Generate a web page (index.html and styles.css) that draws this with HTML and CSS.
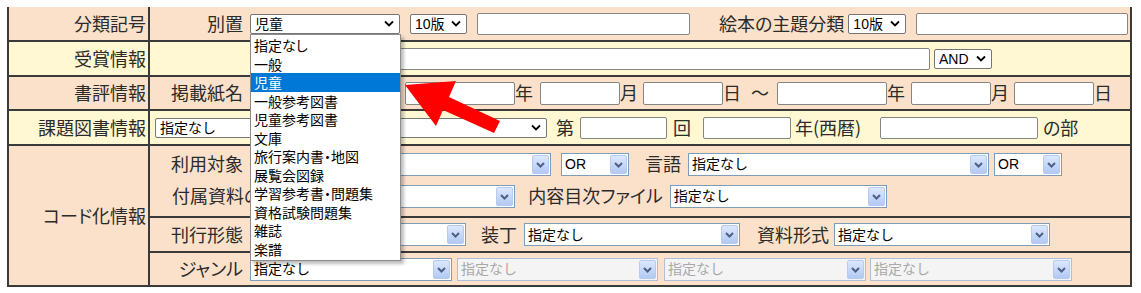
FILE: index.html
```html
<!DOCTYPE html>
<html lang="ja">
<head>
    <meta charset="UTF-8">
    <title>詳細検索</title>
    <link rel="stylesheet" href="styles.css">
</head>
<body>
<div class="page">
    <table class="search">
        <tr class="peach">
            <th>分類記号</th>
            <td>
                <div class="line">
                    <span class="sub">別置</span>
                    <select class="win w150"><option>児童</option></select>
                    <select class="win w57 ml10"><option>10版</option></select>
                    <input type="text" class="txt w213 ml10">
                    <span class="ml29">絵本の主題分類</span>
                    <select class="win w58 ml4"><option>10版</option></select>
                    <input type="text" class="txt w212 ml10">
                </div>
            </td>
        </tr>
        <tr class="cream">
            <th>受賞情報</th>
            <td>
                <div class="line">
                    <span class="sub"></span>
                    <input type="text" class="txt w680">
                    <select class="win w58 ml4"><option>AND</option></select>
                </div>
            </td>
        </tr>
        <tr class="peach">
            <th>書評情報</th>
            <td>
                <div class="line h32">
                    <span class="sub">掲載紙名</span>
                    <select class="win w150"><option>指定なし</option></select>
                    <input type="text" class="txt tall w110 ml5">
                    <span>年</span>
                    <input type="text" class="txt tall w80 ml7">
                    <span>月</span>
                    <input type="text" class="txt tall w80 ml5">
                    <span>日</span>
                    <span class="ml10">〜</span>
                    <input type="text" class="txt tall w110 ml8">
                    <span>年</span>
                    <input type="text" class="txt tall w80 ml6">
                    <span>月</span>
                    <input type="text" class="txt tall w80 ml5">
                    <span>日</span>
                </div>
            </td>
        </tr>
        <tr class="cream">
            <th>課題図書情報</th>
            <td>
                <div class="line">
                    <select class="win w392 ml5"><option>指定なし</option></select>
                    <span class="ml9">第</span>
                    <input type="text" class="txt w87 ml6">
                    <span class="ml6">回</span>
                    <input type="text" class="txt w88 ml12">
                    <span class="ml4 era">年(西暦)</span>
                    <input type="text" class="txt w158">
                    <span class="ml5">の部</span>
                </div>
            </td>
        </tr>
        <tr class="peach">
            <th>コード化情報</th>
            <td>
                <div class="subrow double">
                    <div class="line h32">
                        <span class="sub">利用対象</span>
                        <select class="xp w301"><option>指定なし</option></select>
                        <select class="xp w68 ml10"><option>OR</option></select>
                        <span class="ml16">言語</span>
                        <select class="xp w301 ml7"><option>指定なし</option></select>
                        <select class="xp w68 ml5"><option>OR</option></select>
                    </div>
                    <div class="line h32">
                        <span class="lead">付属資料の有無</span>
                        <select class="xp w216 ml2"><option>指定なし</option></select>
                        <span class="ml13">内容目次ファイル</span>
                        <select class="xp w217 ml7"><option>指定なし</option></select>
                    </div>
                </div>
                <div class="subrow">
                    <div class="line">
                        <span class="sub">刊行形態</span>
                        <select class="xp w216"><option>指定なし</option></select>
                        <span class="ml15">装丁</span>
                        <select class="xp w216 ml7"><option>指定なし</option></select>
                        <span class="ml17">資料形式</span>
                        <select class="xp w216 ml5"><option>指定なし</option></select>
                    </div>
                </div>
                <div class="subrow">
                    <div class="line h32">
                        <span class="sub">ジャンル</span>
                        <select class="xp w202"><option>指定なし</option></select>
                        <select class="xp w201 ml5" disabled><option>指定なし</option></select>
                        <select class="xp w202 ml6" disabled><option>指定なし</option></select>
                        <select class="xp w202 ml4" disabled><option>指定なし</option></select>
                    </div>
                </div>
            </td>
        </tr>
    </table>

    <!-- 別置の選択肢（開いた状態） -->
    <ul class="droplist">
        <li>指定なし</li>
        <li>一般</li>
        <li class="on">児童</li>
        <li>一般参考図書</li>
        <li>児童参考図書</li>
        <li>文庫</li>
        <li>旅行案内書・地図</li>
        <li>展覧会図録</li>
        <li>学習参考書・問題集</li>
        <li>資格試験問題集</li>
        <li>雑誌</li>
        <li>楽譜</li>
    </ul>

    <svg class="arrow" width="105" height="62" viewBox="0 0 105 62">
        <polygon points="5,9 56,5 49,21 100,45 94,57 43,34 36,50" fill="#ff0000"/>
    </svg>
</div>
</body>
</html>
```

FILE: styles.css
```css
body{
    margin: 0;
    padding: 0;
    font-family: "Noto Sans CJK JP", sans-serif;
    font-feature-settings: "palt";
    color: #2b2b2b;
}
.page{
    position: relative;
    padding: 7px 0 0 7px;
}
.search{
    width: 1125px;
    table-layout: fixed;
    border-collapse: separate;
    border-spacing: 0;
    border-left: 2px solid #3a3a3a;
    border-right: 2px solid #3a3a3a;
}
.search th{
    width: 137px;
    padding: 0 2px 0 0;
    border-right: 2px solid #3a3a3a;
    border-bottom: 2px solid #3a3a3a;
    text-align: right;
    font-weight: normal;
    font-size: 18px;
    line-height: 1.2;
}
.search td{
    padding: 0;
    border-bottom: 2px solid #3a3a3a;
}
.peach{
    background-color: #fce1ca;
}
.cream{
    background-color: #fff8d2;
}

.line{
    display: flex;
    align-items: center;
    height: 33px;
    font-size: 18px;
    line-height: 1.2;
    white-space: nowrap;
}
.h32{
    height: 32px;
}
.subrow{
    border-bottom: 2px solid #3a3a3a;
}
.subrow:last-child{
    border-bottom: none;
}
.double{
    padding: 2px 0 4px;
}
.sub{
    width: 93px;
    margin-right: 7px;
    text-align: right;
    flex: none;
}
.lead{
    padding-left: 22px;
}
.era{
    width: 85px;
}

/* 入力欄 */
.txt{
    box-sizing: border-box;
    height: 22px;
    margin: 0;
    padding: 0 3px;
    border: 1px solid #858585;
    border-radius: 2px;
    background: #fff;
    flex: none;
}
.tall{
    height: 23px;
}
.win{
    -webkit-appearance: none;
    appearance: none;
    box-sizing: border-box;
    height: 20px;
    margin: 0;
    padding: 0 0 0 4px;
    border: 1px solid #767676;
    border-radius: 2px;
    background: #fff url("data:image/svg+xml,%3Csvg xmlns='http://www.w3.org/2000/svg' width='10' height='7'%3E%3Cpath d='M1 1.5l4 4 4-4' stroke='%23000' stroke-width='1.8' fill='none'/%3E%3C/svg%3E") no-repeat right 5px center;
    font: 14px "Liberation Sans", "Noto Sans CJK JP", sans-serif;
    color: #000;
    flex: none;
}
.xp{
    -webkit-appearance: none;
    appearance: none;
    box-sizing: border-box;
    height: 23px;
    margin: 0;
    padding: 0 0 0 3px;
    border: 1px solid #7f9db9;
    border-radius: 0;
    background: #fff url("data:image/svg+xml,%3Csvg xmlns='http://www.w3.org/2000/svg' width='17' height='19'%3E%3Cdefs%3E%3ClinearGradient id='g' x1='0' y1='0' x2='0' y2='1'%3E%3Cstop offset='0' stop-color='%23dde8fd'/%3E%3Cstop offset='1' stop-color='%23b2c8f3'/%3E%3C/linearGradient%3E%3C/defs%3E%3Crect x='.5' y='.5' width='16' height='18' rx='1.5' fill='url(%23g)' stroke='%23b6cbf0'/%3E%3Cpath d='M5 8l3.5 3.5L12 8' stroke='%234d6185' stroke-width='2' fill='none'/%3E%3C/svg%3E") no-repeat right 1px center;
    font: 14px "Liberation Sans", "Noto Sans CJK JP", sans-serif;
    color: #000;
    flex: none;
}
.xp:disabled{
    background-color: #f4f4f4;
    border-color: #aec0d8;
    color: #a8a8a8;
    opacity: 1;
}

/* 幅 */
.w57{ width: 57px; }
.w58{ width: 58px; }
.w68{ width: 68px; }
.w80{ width: 80px; }
.w87{ width: 87px; }
.w88{ width: 88px; }
.w110{ width: 110px; }
.w150{ width: 150px; }
.w158{ width: 158px; }
.w201{ width: 201px; }
.w202{ width: 202px; }
.w212{ width: 212px; }
.w213{ width: 213px; }
.w216{ width: 216px; }
.w217{ width: 217px; }
.w301{ width: 301px; }
.w392{ width: 392px; }
.w680{ width: 680px; }

/* 間隔 */
.ml2{ margin-left: 2px; }
.ml4{ margin-left: 4px; }
.ml5{ margin-left: 5px; }
.ml6{ margin-left: 6px; }
.ml7{ margin-left: 7px; }
.ml8{ margin-left: 8px; }
.ml9{ margin-left: 9px; }
.ml10{ margin-left: 10px; }
.ml12{ margin-left: 12px; }
.ml13{ margin-left: 13px; }
.ml15{ margin-left: 15px; }
.ml16{ margin-left: 16px; }
.ml17{ margin-left: 17px; }
.ml29{ margin-left: 29px; }

/* 開いたプルダウン */
.droplist{
    position: absolute;
    left: 250px;
    top: 34px;
    width: 151px;
    box-sizing: border-box;
    margin: 0;
    padding: 1px 0 2px;
    list-style: none;
    background: #fff;
    border: 1px solid #8c8c8c;
    box-shadow: 3px 3px 3px rgba(0, 0, 0, 0.25);
    font-size: 14px;
    line-height: 18.5px;
    color: #000;
}
.droplist li{
    padding-left: 3px;
}
.droplist .on{
    background-color: #0078d7;
    color: #fff;
}
.arrow{
    position: absolute;
    left: 400px;
    top: 76px;
}
```
